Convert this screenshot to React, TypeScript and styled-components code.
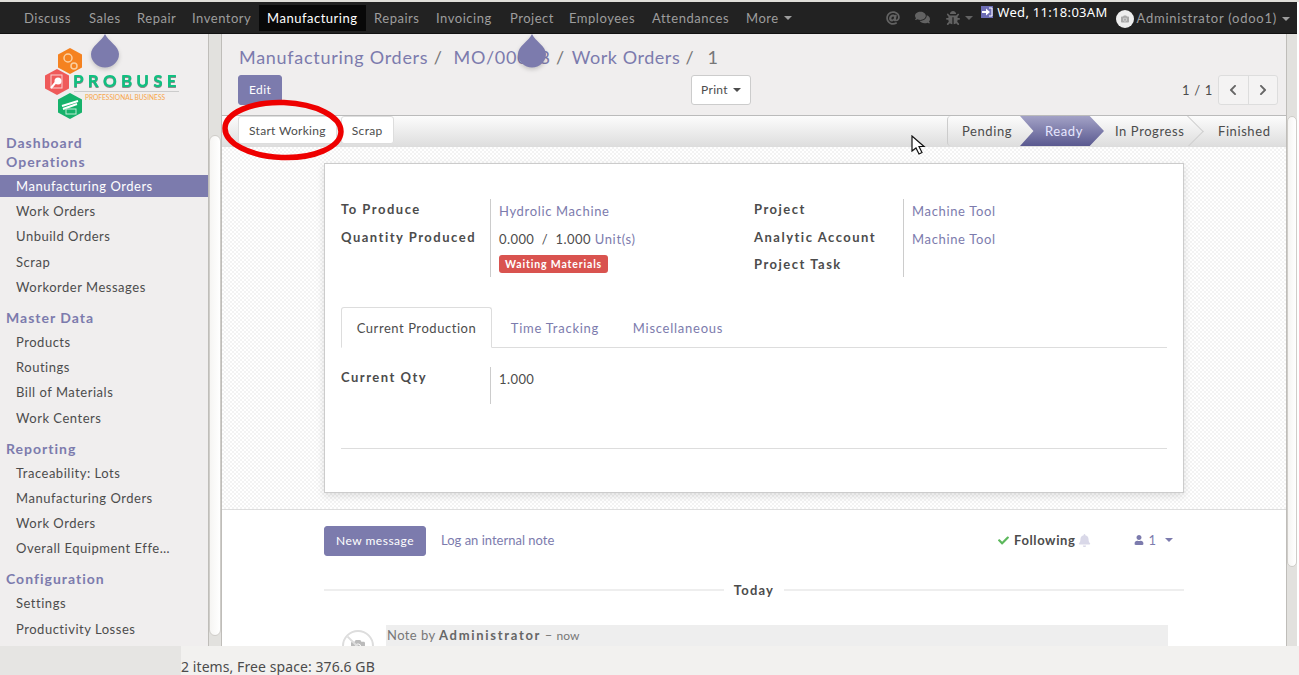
import React from "react";
import styled, { createGlobalStyle } from "styled-components";
import { FaAt, FaComments, FaBug, FaCheck, FaBell, FaUser, FaChevronLeft, FaChevronRight, FaCamera } from "react-icons/fa";

const Global = createGlobalStyle`
  html, body { margin: 0; padding: 0; background: #fff; overflow: hidden; }
  * { box-sizing: border-box; }
  body { font-family: Lato, "Open Sans", sans-serif; font-size: 13px; color: #4c4c4c; }
`;

const Shell = styled.div`
  position: relative; width: 1299px; height: 675px; overflow: hidden;
  display: flex; flex-direction: column; background: #fff;
`;
const TopStrip = styled.div`height: 2px; background: #dfded9; flex: none;`;
const NavBar = styled.nav`
  flex: none; height: 32px; width: 1297px; background: #222; border-bottom: 1px solid #111;
  display: flex; align-items: center; padding: 0 7px 0 16px;
`;
const NavItem = styled.a<{ $active?: boolean; $w?: number }>`
  height: 26px; display: flex; align-items: center; padding-left: 8px; letter-spacing: .52px; flex: none;
  width: ${p => (p.$w ? `${p.$w}px` : "auto")};
  color: ${p => (p.$active ? "#fff" : "#9d9d9d")};
  background: ${p => (p.$active ? "#080808" : "transparent")};
`;
const Caret = styled.span<{ $c?: string }>`
  display: inline-block; width: 0; height: 0; margin-left: 5px; vertical-align: middle;
  border-top: 4px solid ${p => p.$c || "#9d9d9d"}; border-left: 4px solid transparent; border-right: 4px solid transparent;
`;
const NavRight = styled.div`margin-left: auto; display: flex; align-items: center; color: #626262; height: 100%;`;
const NavIcon = styled.span<{ $ml: number; $s: number }>`display: flex; align-items: center; margin-left: ${p => p.$ml}px; font-size: ${p => p.$s}px;`;
const Clock = styled.span`
  display: flex; align-items: flex-start; color: #fff; font-family: "Noto Sans", sans-serif; font-size: 13px;
  margin: -12px 0 0 8px; letter-spacing: .3px;
`;
const ClockIcon = styled.svg`width: 12px; height: 12px; margin: 3px 4px 0 0;`;
const Avatar = styled.span`
  width: 18px; height: 18px; border-radius: 50%; background: #eee; margin: 3px 3px 0 8px; color: #aaa;
  display: flex; align-items: center; justify-content: center; font-size: 8px;
`;
const UserName = styled.span`color: #9d9d9d; letter-spacing: .75px;`;

const Body = styled.div`flex: 1; min-height: 0; display: flex; background: #f0eeee; width: 1297px;`;
const Side = styled.aside`width: 208px; flex: none; display: flex; flex-direction: column; overflow: hidden;`;
const LogoBox = styled.div`height: 99px; flex: none; padding: 11px 0 0 44px;`;
const Head = styled.div<{ $first?: boolean }>`
  font-weight: 700; font-size: 14px; line-height: 19px; color: #7c7bad; padding-left: 6px; letter-spacing: 1px;
  margin-top: ${p => (p.$first ? 0 : "7px")};
`;
const HeadGap = styled.div`height: 4px;`;
const Item = styled.a<{ $active?: boolean }>`
  display: block; height: 22px; line-height: 22px; padding-left: 16px; margin-bottom: 3.2px; letter-spacing: .52px; white-space: nowrap;
  background: ${p => (p.$active ? "#7c7bad" : "transparent")};
  color: ${p => (p.$active ? "#fff" : "#4c4c4c")};
`;
const Track = styled.div`
  flex: none; background: #e2e1de; border-left: 1px solid #bfbdb9; border-right: 1px solid #bfbdb9; position: relative;
`;
const SideTrack = styled(Track)`width: 14px;`;
const MainTrack = styled(Track)`width: 11px; border-right: none;`;
const Thumb = styled.div<{ $t: number; $h: number }>`
  margin-top: ${p => p.$t}px; height: ${p => p.$h}px; background: linear-gradient(90deg,#f6f5f3,#fff);
  border: 1px solid #cfcdc9; border-radius: 7px;
`;
const Main = styled.main`flex: 1; min-width: 0; display: flex; flex-direction: column;`;
const Panel = styled.div`flex: none; height: 81px; padding: 10px 0 0 16px; background: #f0eeee;`;
const Crumbs = styled.div`
  font-size: 18px; line-height: 27px; color: #7c7bad; white-space: pre; letter-spacing: .72px; height: 31px; padding-left: 1px;
`;
const Sep = styled.span<{ $m: number }>`color: #777; margin-right: ${p => p.$m}px;`;
const CrumbShort = styled.span`letter-spacing: .55px;`;
const CrumbCur = styled.span`color: #777;`;
const PanelRow = styled.div`display: grid; grid-template-columns: 453px 1fr auto; align-items: center; padding-right: 8px;`;
const Primary = styled.button`
  font: inherit; font-size: 12px; height: 30px; padding: 0 10px 2px; background: #7c7bad; color: #fff; border: 1px solid #7c7bad; border-radius: 3px; letter-spacing: .4px;
  justify-self: start; white-space: nowrap;
`;
const Print = styled.button`
  font: inherit; font-size: 12px; height: 30px; width: 60px; padding: 0 0 2px; background: #fff; color: #4c4c4c; border: 1px solid #ccc; border-radius: 3px; letter-spacing: .3px;
  justify-self: start;
`;
const Pager = styled.div`display: flex; align-items: center; letter-spacing: .7px; color: #4c4c4c;`;
const PagerBtns = styled.div`display: flex; margin-left: 5px; height: 30px; border: 1px solid #ddd; border-radius: 3px; width: 60px; background: #f4f3f3;`;
const PagerBtn = styled.span<{ $b?: boolean }>`
  flex: 1; display: flex; align-items: center; justify-content: center; color: #666; font-size: 12px;
  border-left: ${p => (p.$b ? "1px solid #ddd" : "none")};
`;
const StatusBar = styled.div`
  flex: none; height: 32px; border-top: 1px solid #bbb; border-bottom: 1px solid #ddd;
  background: linear-gradient(#fcfcfc,#dedede); display: flex; align-items: stretch; padding-left: 16px;
`;
const WhiteBtn = styled.button`
  font: inherit; font-size: 12px; height: 28px; align-self: flex-start; padding: 0 10px; background: #fff; color: #4c4c4c; border: 1px solid #ddd; border-radius: 3px; letter-spacing: .3px;
`;
const BtnGap = styled.span`width: 4px;`;
const Steps = styled.div`margin-left: auto; display: flex; border-left: 1px solid #ccc; border-radius: 4px 0 0 4px;`;
const Step = styled.div<{ $w: number; $pl: number; $active?: boolean; $chev?: boolean }>`
  position: relative; overflow: hidden; width: ${p => p.$w}px; padding-left: ${p => p.$pl}px; line-height: 30px; letter-spacing: .58px;
  color: ${p => (p.$active ? "#e6e6ff" : "#4c4c4c")};
  background: ${p => (p.$active ? "linear-gradient(#a3a2c6,#5a5990)" : "transparent")};
  clip-path: ${p => (p.$active ? "polygon(0 0,83% 0,100% 50%,83% 100%,0 100%,16% 50%)" : "none")};
  ${p => p.$chev && `&::after{content:"";position:absolute;top:4px;right:7px;width:22px;height:22px;transform:rotate(45deg);border-top:1px solid #cfcfcf;border-right:1px solid #cfcfcf;}`}
`;
const Sheetbg = styled.div`
  flex: none; height: 363px; padding: 16px 0 0 102px; border-bottom: 1px solid #ddd;
  background-color: #fff;
  background-image: linear-gradient(45deg,#f3f3f3 25%,transparent 25%,transparent 75%,#f3f3f3 75%),linear-gradient(45deg,#f3f3f3 25%,transparent 25%,transparent 75%,#f3f3f3 75%);
  background-size: 4px 4px; background-position: 0 0,2px 2px;
`;
const Sheet = styled.div`
  width: 860px; height: 330px; background: #fff; border: 1px solid #ccc; box-shadow: 0 3px 8px rgba(0,0,0,.12); padding: 35px 16px 0;
  display: flex; flex-direction: column;
`;
const Groups = styled.div`display: flex; height: 78px;`;
const Group = styled.div`width: 413px; display: flex;`;
const Labels = styled.div`
  width: 150px; border-right: 1px solid #ccc; display: flex; flex-direction: column; gap: 8px; padding-top: 1px; flex: none;
`;
const Label = styled.div`font-weight: 700; line-height: 19.5px; color: #4c4c4c; letter-spacing: 1.5px; white-space: nowrap;`;
const Values = styled.div`padding: 3px 0 0 8px; display: flex; flex-direction: column;`;
const Link = styled.a`color: #7c7bad; letter-spacing: .65px;`;
const Value = styled.div<{ $h?: number }>`line-height: 19px; height: ${p => p.$h || 28}px; white-space: pre; letter-spacing: .42px;`;
const Badge = styled.span`
  display: inline-block; background: #d9534f; color: #fff; font-weight: 700; font-size: 10.5px; line-height: 18px; height: 18px; padding: 0 6px; border-radius: 3px; letter-spacing: .85px;
`;
const Tabs = styled.div`display: flex; margin-top: 30px; height: 41px; border-bottom: 1px solid #ddd; flex: none;`;
const Tab = styled.div<{ $active?: boolean; $w: number }>`
  width: ${p => p.$w}px; height: 41px; text-align: center; line-height: 43px; letter-spacing: .75px; flex: none;
  ${p => p.$active
    ? "background:#fff;border:1px solid #ddd;border-bottom:1px solid #fff;border-radius:3px 3px 0 0;color:#4c4c4c;line-height:41px;letter-spacing:.55px;"
    : "color:#7c7bad;"}
`;
const QtyRow = styled.div`display: flex; margin-top: 19px; height: 37px; flex: none;`;
const QtyLabel = styled(Labels)`padding-top: 1px;`;
const QtyVal = styled.div`padding: 3px 0 0 8px; letter-spacing: .42px; line-height: 19px;`;
const Hr = styled.div`margin-top: 44px; height: 1px; background: #ddd; flex: none;`;
const Chatter = styled.div`flex: 1; min-height: 0; background: #fff; padding: 16px 0 0 102px; width: 100%; overflow: hidden;`;
const ChatTop = styled.div`width: 860px; height: 30px; display: flex; align-items: center;`;
const NewMsg = styled(Primary)`height: 30px; padding: 0 10px 2px; width: 102px; letter-spacing: .5px;`;
const LogNote = styled.a`color: #7c7bad; margin: -2px 0 0 15px; letter-spacing: 0;`;
const Follow = styled.div`margin: -2px 0 0 auto; display: flex; align-items: center; font-weight: 700; letter-spacing: .6px; color: #4c4c4c;`;
const Check = styled(FaCheck)`color: #5cb85c; font-size: 11px; margin-right: 5px;`;
const Bell = styled(FaBell)`color: #d9d8e8; font-size: 13px; margin-left: 3px;`;
const Followers = styled.div`margin: -2px 11px 0 43px; display: flex; align-items: center; color: #7c7bad; gap: 4px; font-size: 13px;`;
const Caret2 = styled(Caret)`margin-left: 5px;`;
const DateSep = styled.div`width: 860px; display: flex; align-items: center; margin-top: 23px; height: 22px;`;
const Line = styled.div`flex: 1; height: 2px; background: #eee;`;
const DateText = styled.div`font-weight: 700; padding: 0 10px; letter-spacing: 1.2px; color: #4c4c4c;`;
const Msg = styled.div`display: flex; margin-top: 24px; padding-left: 18px;`;
const MsgAvatar = styled.div`
  width: 32px; height: 32px; border-radius: 50%; border: 2px solid #ddd; margin-top: 5px; color: #bbb; flex: none;
  display: flex; align-items: center; justify-content: center; font-size: 14px; position: relative; overflow: hidden;
`;
const Slash = styled.span`position: absolute; left: 14px; top: -4px; width: 2px; height: 40px; background: #ddd; transform: rotate(-45deg);`;
const MsgHead = styled.div`
  margin-left: 12px; width: 782px; height: 24px; background: #eee; color: #777; line-height: 21px; padding-left: 1px; white-space: pre; letter-spacing: .42px;
`;
const MsgAuthor = styled.b`letter-spacing: 1.7px; color: #666;`;
const MsgNow = styled.span`font-size: 12px; letter-spacing: 0;`;
const Bottom = styled.div`flex: none; height: 29px; display: flex; background: #f2f1ef; z-index: 2;`;
const BottomLeft = styled.div`width: 181px; background: #e6e5e3;`;
const BottomText = styled.div`font-family: "Noto Sans", sans-serif; font-size: 14px; line-height: 41px; height: 29px; color: #4c4c4c; letter-spacing: .08px;`;
const Drop = styled.svg<{ $x: number }>`position: absolute; left: ${p => p.$x}px; top: 33px; width: 32px; height: 38px; pointer-events: none; z-index: 5; filter: drop-shadow(0 2px 2px rgba(0,0,0,.18));`;
const Ring = styled.svg`position: absolute; left: 218px; top: 97px; width: 130px; height: 68px; z-index: 6; pointer-events: none;`;
const Cursor = styled.svg`position: absolute; left: 911px; top: 135px; width: 15px; height: 22px; z-index: 6;`;
const LogoTitle = styled.text`
  fill: #10c080; font-family: Lato, sans-serif; font-weight: 900; font-size: 17px; letter-spacing: 4.2px;
  filter: drop-shadow(0 1.5px 0 #8a8a8a);
`;
const LogoSub = styled.text`fill: #f7a64a; font-family: Lato, sans-serif; font-size: 6.6px;`;

const Droplet = ({ x }: { x: number }) => (
  <Drop $x={x} viewBox="0 0 32 38">
    <path d="M16 1 C19 8 30 13 30 21 A14 13.500 0 0 1 2 21 C2 13 13 8 16 1Z" fill="#7c7bad" />
  </Drop>
);

const Hex = ({ x, y, c, children }: { x: number; y: number; c: string; children?: React.ReactNode }) => (
  <g transform={`translate(${x} ${y})`}>
    <polygon points="0,-13 12,-6.500 12,6.500 0,13 -12,6.500 -12,-6.500" fill={c} />
    {children}
  </g>
);

const Logo = () => (
  <svg width="150" height="76" viewBox="0 0 150 76">
    <Hex x={26} y={16} c="#f58220">
      <circle cx="-2" cy="-3" r="4" fill="none" stroke="#fbcf9f" strokeWidth="1.5" />
      <circle cx="4" cy="5" r="3" fill="none" stroke="#fbcf9f" strokeWidth="1.5" />
    </Hex>
    <Hex x={13} y={37} c="#ef5a5a">
      <rect x="-6" y="-7" width="11" height="13" fill="none" stroke="#fbd0d0" />
      <circle cx="1" cy="-1" r="3.500" fill="#fff" />
      <path d="M-1 0-6 6" stroke="#fff" strokeWidth="2" />
    </Hex>
    <Hex x={26} y={61} c="#16b26b">
      <path d="M-8 0 8-5M-7 3 7-2" stroke="#fff" strokeWidth="2" />
      <rect x="-4" y="3" width="10" height="5" fill="none" stroke="#bdecd3" />
    </Hex>
    <LogoTitle x="29" y="42">PROBUSE</LogoTitle>
    <rect x="30" y="46" width="105" height="1" fill="#ccc" />
    <LogoSub x="41" y="55">PROFESSIONAL BUSINESS</LogoSub>
  </svg>
);

const navItems: [string, number][] = [["Discuss", 65], ["Sales", 48], ["Repair", 55], ["Inventory", 75], ["Manufacturing", 107], ["Repairs", 62], ["Invoicing", 74], ["Project", 59], ["Employees", 83], ["Attendances", 94]];

export default function App() {
  return (
    <Shell>
      <Global />
      <TopStrip />
      <NavBar>
        {navItems.map(([n, w]) => <NavItem key={n} $w={w} $active={n === "Manufacturing"}>{n}</NavItem>)}
        <NavItem>More<Caret /></NavItem>
        <NavRight>
          <NavIcon $ml={0} $s={14}><FaAt /></NavIcon>
          <NavIcon $ml={15} $s={15}><FaComments /></NavIcon>
          <NavIcon $ml={16} $s={14}><FaBug /><Caret $c="#626262" /></NavIcon>
          <Clock>
            <ClockIcon viewBox="0 0 12 12">
              <rect width="12" height="12" fill="#6d6db5" />
              <path d="M1 5h4V2.500L9 6 5 9.500V7H1z" fill="#fff" />
              <path d="M8 2h3v8H8" fill="none" stroke="#fff" />
            </ClockIcon>
            Wed, 11:18:03AM
          </Clock>
          <Avatar><FaCamera /></Avatar>
          <UserName>Administrator (odoo1)<Caret /></UserName>
        </NavRight>
      </NavBar>
      <Body>
        <Side>
          <LogoBox><Logo /></LogoBox>
          <Head $first>Dashboard</Head>
          <Head $first>Operations</Head>
          <HeadGap />
          <Item $active>Manufacturing Orders</Item>
          <Item>Work Orders</Item>
          <Item>Unbuild Orders</Item>
          <Item>Scrap</Item>
          <Item>Workorder Messages</Item>
          <Head>Master Data</Head>
          <HeadGap />
          <Item>Products</Item>
          <Item>Routings</Item>
          <Item>Bill of Materials</Item>
          <Item>Work Centers</Item>
          <Head>Reporting</Head>
          <HeadGap />
          <Item>Traceability: Lots</Item>
          <Item>Manufacturing Orders</Item>
          <Item>Work Orders</Item>
          <Item>Overall Equipment Effe…</Item>
          <Head>Configuration</Head>
          <HeadGap />
          <Item>Settings</Item>
          <Item>Productivity Losses</Item>
        </Side>
        <SideTrack><Thumb $t={101} $h={501} /></SideTrack>
        <Main>
          <Panel>
            <Crumbs>
              Manufacturing Orders<Sep $m={11}> /</Sep>MO/00008<Sep $m={7}> /</Sep><CrumbShort>Work Orders</CrumbShort><Sep $m={13}> /</Sep><CrumbCur>1</CrumbCur>
            </Crumbs>
            <PanelRow>
              <Primary>Edit</Primary>
              <Print>Print<Caret $c="#4c4c4c" /></Print>
              <Pager>1 / 1
                <PagerBtns>
                  <PagerBtn><FaChevronLeft /></PagerBtn>
                  <PagerBtn $b><FaChevronRight /></PagerBtn>
                </PagerBtns>
              </Pager>
            </PanelRow>
          </Panel>
          <StatusBar>
            <WhiteBtn>Start Working</WhiteBtn>
            <BtnGap />
            <WhiteBtn>Scrap</WhiteBtn>
            <Steps>
              <Step $w={72} $pl={14}>Pending</Step>
              <Step $w={84} $pl={25} $active>Ready</Step>
              <Step $w={102} $pl={11} $chev>In Progress</Step>
              <Step $w={80} $pl={12}>Finished</Step>
            </Steps>
          </StatusBar>
          <Sheetbg>
            <Sheet>
              <Groups>
                <Group>
                  <Labels>
                    <Label>To Produce</Label>
                    <Label>Quantity Produced</Label>
                  </Labels>
                  <Values>
                    <Value><Link>Hydrolic Machine</Link></Value>
                    <Value $h={25}>0.000  /  1.000 <Link>Unit(s)</Link></Value>
                    <div><Badge>Waiting Materials</Badge></div>
                  </Values>
                </Group>
                <Group>
                  <Labels>
                    <Label>Project</Label>
                    <Label>Analytic Account</Label>
                    <Label>Project Task</Label>
                  </Labels>
                  <Values>
                    <Value><Link>Machine Tool</Link></Value>
                    <Value><Link>Machine Tool</Link></Value>
                  </Values>
                </Group>
              </Groups>
              <Tabs>
                <Tab $active $w={151}>Current Production</Tab>
                <Tab $w={126}>Time Tracking</Tab>
                <Tab $w={120}>Miscellaneous</Tab>
              </Tabs>
              <QtyRow>
                <QtyLabel><Label>Current Qty</Label></QtyLabel>
                <QtyVal>1.000</QtyVal>
              </QtyRow>
              <Hr />
            </Sheet>
          </Sheetbg>
          <Chatter>
            <ChatTop>
              <NewMsg>New message</NewMsg>
              <LogNote>Log an internal note</LogNote>
              <Follow><Check />Following<Bell /></Follow>
              <Followers><FaUser size={10} />1<Caret2 $c="#7c7bad" /></Followers>
            </ChatTop>
            <DateSep><Line /><DateText>Today</DateText><Line /></DateSep>
            <Msg>
              <MsgAvatar><FaCamera /><Slash /></MsgAvatar>
              <MsgHead>Note by <MsgAuthor>Administrator</MsgAuthor> – <MsgNow>now</MsgNow></MsgHead>
            </Msg>
          </Chatter>
        </Main>
        <MainTrack><Thumb $t={82} $h={451} /></MainTrack>
      </Body>
      <Bottom>
        <BottomLeft />
        <BottomText>2 items, Free space: 376.6 GB</BottomText>
      </Bottom>
      <Droplet x={89} />
      <Droplet x={516} />
      <Ring viewBox="0 0 130 68">
        <ellipse cx="65" cy="33" rx="58" ry="27.500" fill="none" stroke="#ee0000" strokeWidth="5.500" transform="rotate(2 65 33)" />
      </Ring>
      <Cursor viewBox="0 0 15 22">
        <path d="M1 1v15l4-3 3 6 3-1.500-3-6h5z" fill="#fff" stroke="#111" strokeWidth="1.200" />
      </Cursor>
    </Shell>
  );
}
